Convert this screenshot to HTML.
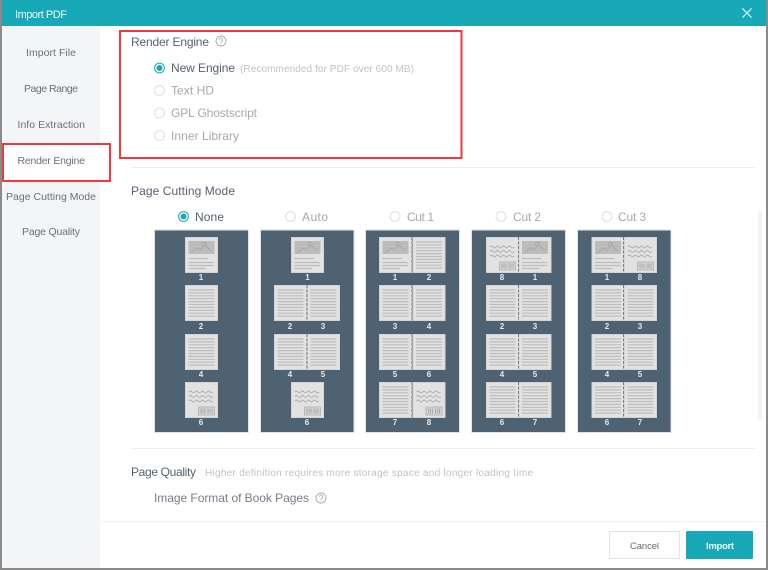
<!DOCTYPE html>
<html><head><meta charset="utf-8"><style>
html,body{margin:0;padding:0;background:#8a8a8a;width:768px;height:570px;overflow:hidden}
svg{display:block;filter:blur(.35px)}
text{font-family:"Liberation Sans",sans-serif;font-size:12px;fill:#566270}
.s{fill:#68717c;font-size:10.5px}
.d{fill:#a4a8ae;font-size:12px}
.h{fill:#bfc2c6;font-size:10px}
.n{fill:#e6e9eb;font-size:8px;font-weight:bold;text-anchor:middle}
</style></head><body>
<svg width="768" height="570" viewBox="0 0 768 570" xmlns="http://www.w3.org/2000/svg">
<defs>
<g id="tl" stroke="#bcbcbc" stroke-width="1.2"><path d="M0 .5H26M0 3.4H26M0 6.3H26M0 9.2H26M0 12.1H26M0 15H26M0 17.9H26M0 20.8H26M0 23.7H26M0 26.6H26"/></g>
<g id="T"><rect x=".5" y=".5" width="32" height="35" fill="#e2e2e2" stroke="#d2d5d7"/><use href="#tl" x="3.5" y="4.5"/></g>
<g id="P"><rect x=".5" y=".5" width="32" height="35" fill="#e2e2e2" stroke="#d2d5d7"/><rect x="3.5" y="4" width="26" height="13" fill="#bcbcbc"/><path d="M6 16l6-5 3 2 5-5 6 6" fill="none" stroke="#a6a9ac" stroke-width="1"/><circle cx="19" cy="7" r="2" fill="none" stroke="#a6a9ac"/><path d="M3.5 21.5H23M3.5 25.5H29M3.5 28.5H29M3.5 31.5H21" stroke="#bcbcbc" stroke-width="1.2"/></g>
<g id="B"><rect x=".5" y=".5" width="32" height="35" fill="#e2e2e2" stroke="#d2d5d7"/><path d="M4 10q1.5-2 3 0t3 0 3 0 3 0 3 0 3 0 3 0 3 0M4 14.5q1.5-2 3 0t3 0 3 0 3 0 3 0 3 0 3 0 3 0M4 19q1.5-2 3 0t3 0 3 0 3 0 3 0 3 0 3 0 3 0" fill="none" stroke="#adadad" stroke-width="1"/><rect x="13.5" y="25" width="16" height="8" fill="#d4d4d4" stroke="#b8b8b8"/><path d="M16 26.5v5M18 26.5v5M20 26.5v5M23 26.5v5M25 26.5v5M27 26.5v5" stroke="#aaa"/></g>
<g id="F"><path d="M0 0V36" stroke="#777f86" stroke-width="1" stroke-dasharray="3 1.5"/></g>
<g id="q" fill="none"><circle r="5" stroke="#a6aaaf" stroke-width=".9"/><path d="M-1.7-1.3a1.7 1.7 0 1 1 2.7 1.4c-.7.5-1 .8-1 1.5M0 2.6v.9" stroke="#a6aaaf" stroke-width=".9"/></g>
<circle id="r" r="4.9" fill="#fff" stroke="#dcdee0" stroke-width="1"/>
<g id="c"><circle r="4.9" fill="#fff" stroke="#17a9b8" stroke-width="1"/><circle r="3" fill="#17a9b8"/></g>
</defs>

<!-- dialog -->
<rect x="2" y="0" width="764" height="568" fill="#fff"/>
<rect x="2" y="0" width="764" height="26" fill="#17a9b8"/>
<rect x="2" y="26" width="98" height="542" fill="#f4f5f7"/>
<rect x="2" y="143" width="108" height="38" fill="#fff"/>
<text x="15" y="18" style="font-size:11px;fill:#eef9fa" textLength="52">Import PDF</text>
<path d="M742.5 8.5l9 9M751.5 8.5l-9 9" stroke="#f2fbfc" stroke-width="1.2"/>

<!-- sidebar -->
<text class="s" x="26" y="56" textLength="50">Import File</text>
<text class="s" x="24" y="92" textLength="54">Page Range</text>
<text class="s" x="17.5" y="128" textLength="67.5">Info Extraction</text>
<text class="s" x="17.5" y="164" textLength="67.5">Render Engine</text>
<text class="s" x="6" y="200" textLength="90">Page Cutting Mode</text>
<text class="s" x="22" y="235" textLength="58">Page Quality</text>

<!-- render engine -->
<text x="131" y="46" textLength="78">Render Engine</text>
<use href="#q" x="221" y="41"/>
<use href="#c" x="159.5" y="68"/>
<text x="171" y="72" textLength="64">New Engine</text>
<text class="h" x="240" y="72" textLength="174">(Recommended for PDF over 600 MB)</text>
<use href="#r" x="159.5" y="90.5"/>
<text class="d" x="171" y="94.5" textLength="43">Text HD</text>
<use href="#r" x="159.5" y="113"/>
<text class="d" x="171" y="117" textLength="86">GPL Ghostscript</text>
<use href="#r" x="159.5" y="135.5"/>
<text class="d" x="171" y="140" textLength="68">Inner Library</text>

<rect x="131" y="167" width="625" height="1" fill="#eeeff0"/>
<text x="131" y="195" textLength="104">Page Cutting Mode</text>

<use href="#c" x="183.5" y="216.5"/>
<text x="195" y="221" textLength="29">None</text>
<use href="#r" x="290.5" y="216.5"/>
<text class="d" x="302" y="221" textLength="26">Auto</text>
<use href="#r" x="395" y="216.5"/>
<text class="d" x="407" y="221" textLength="27">Cut 1</text>
<use href="#r" x="501" y="216.5"/>
<text class="d" x="513" y="221" textLength="28">Cut 2</text>
<use href="#r" x="607" y="216.5"/>
<text class="d" x="618" y="221" textLength="28">Cut 3</text>

<!-- panels -->
<g fill="#4f6272" stroke="#dde3e8" stroke-width="1">
<rect x="154.5" y="230" width="94" height="202.5"/>
<rect x="260.5" y="230" width="93.5" height="202.5"/>
<rect x="365.5" y="230" width="94" height="202.5"/>
<rect x="471.5" y="230" width="94" height="202.5"/>
<rect x="577.5" y="230" width="93.5" height="202.5"/>
</g>

<!-- panel 1 -->
<use href="#P" x="185" y="237"/><use href="#T" x="185" y="285"/><use href="#T" x="185" y="334"/><use href="#B" x="185" y="382"/>
<text class="n" x="201" y="280">1</text><text class="n" x="201" y="329">2</text><text class="n" x="201" y="377">4</text><text class="n" x="201" y="425">6</text>

<!-- panel 2 -->
<use href="#P" x="291" y="237"/>
<use href="#T" x="274" y="285"/><use href="#T" x="307" y="285"/><use href="#F" x="307" y="285"/>
<use href="#T" x="274" y="334"/><use href="#T" x="307" y="334"/><use href="#F" x="307" y="334"/>
<use href="#B" x="291" y="382"/>
<text class="n" x="307.5" y="280">1</text><text class="n" x="290" y="329">2</text><text class="n" x="323" y="329">3</text><text class="n" x="290" y="377">4</text><text class="n" x="323" y="377">5</text><text class="n" x="307" y="425">6</text>

<!-- panel 3 -->
<use href="#P" x="379" y="237"/><use href="#T" x="412.5" y="237"/><use href="#F" x="412" y="237"/>
<use href="#T" x="379" y="285"/><use href="#T" x="412.5" y="285"/><use href="#F" x="412" y="285"/>
<use href="#T" x="379" y="334"/><use href="#T" x="412.5" y="334"/><use href="#F" x="412" y="334"/>
<use href="#T" x="379" y="382"/><use href="#B" x="412.5" y="382"/><use href="#F" x="412" y="382"/>
<text class="n" x="395" y="280">1</text><text class="n" x="429" y="280">2</text><text class="n" x="395" y="329">3</text><text class="n" x="429" y="329">4</text><text class="n" x="395" y="377">5</text><text class="n" x="429" y="377">6</text><text class="n" x="395" y="425">7</text><text class="n" x="429" y="425">8</text>

<!-- panel 4 -->
<use href="#B" x="486" y="237"/><use href="#P" x="518.5" y="237"/><use href="#F" x="518.5" y="237"/>
<use href="#T" x="486" y="285"/><use href="#T" x="518.5" y="285"/><use href="#F" x="518.5" y="285"/>
<use href="#T" x="486" y="334"/><use href="#T" x="518.5" y="334"/><use href="#F" x="518.5" y="334"/>
<use href="#T" x="486" y="382"/><use href="#T" x="518.5" y="382"/><use href="#F" x="518.5" y="382"/>
<text class="n" x="502" y="280">8</text><text class="n" x="535" y="280">1</text><text class="n" x="502" y="329">2</text><text class="n" x="535" y="329">3</text><text class="n" x="502" y="377">4</text><text class="n" x="535" y="377">5</text><text class="n" x="502" y="425">6</text><text class="n" x="535" y="425">7</text>

<!-- panel 5 -->
<use href="#P" x="591.5" y="237"/><use href="#B" x="624" y="237"/><use href="#F" x="623.5" y="237"/>
<use href="#T" x="591.5" y="285"/><use href="#T" x="624" y="285"/><use href="#F" x="623.5" y="285"/>
<use href="#T" x="591.5" y="334"/><use href="#T" x="624" y="334"/><use href="#F" x="623.5" y="334"/>
<use href="#T" x="591.5" y="382"/><use href="#T" x="624" y="382"/><use href="#F" x="623.5" y="382"/>
<text class="n" x="607" y="280">1</text><text class="n" x="640" y="280">8</text><text class="n" x="607" y="329">2</text><text class="n" x="640" y="329">3</text><text class="n" x="607" y="377">4</text><text class="n" x="640" y="377">5</text><text class="n" x="607" y="425">6</text><text class="n" x="640" y="425">7</text>

<!-- scrollbar -->
<rect x="758" y="211" width="4" height="209" rx="1" fill="#f2f3f4"/>

<!-- page quality -->
<rect x="131" y="448" width="625" height="1" fill="#eeeff0"/>
<text x="131" y="476" textLength="65">Page Quality</text>
<text class="h" x="205" y="476" textLength="328">Higher definition requires more storage space and longer loading time</text>
<text x="154" y="502" style="fill:#767e88" textLength="155">Image Format of Book Pages</text>
<use href="#q" x="321" y="498"/>

<!-- footer -->
<rect x="100" y="521" width="666" height="1" fill="#f0f1f2"/>
<rect x="609.5" y="531.5" width="70" height="27" fill="#fff" stroke="#e2e3e4"/>
<text x="630" y="549" style="font-size:9.5px;fill:#666c72" textLength="29">Cancel</text>
<rect x="686" y="531" width="67" height="28" rx="1" fill="#17a9b8"/>
<text x="706" y="549" style="font-size:9.5px;font-weight:bold;fill:#eef9fa" textLength="28">Import</text>

<!-- red highlight boxes -->
<rect x="120" y="31" width="341.5" height="127" fill="none" stroke="#f0383e" stroke-width="2"/>
<rect x="3" y="144" width="107" height="37" fill="none" stroke="#f0383e" stroke-width="2"/>
</svg>
</body></html>
